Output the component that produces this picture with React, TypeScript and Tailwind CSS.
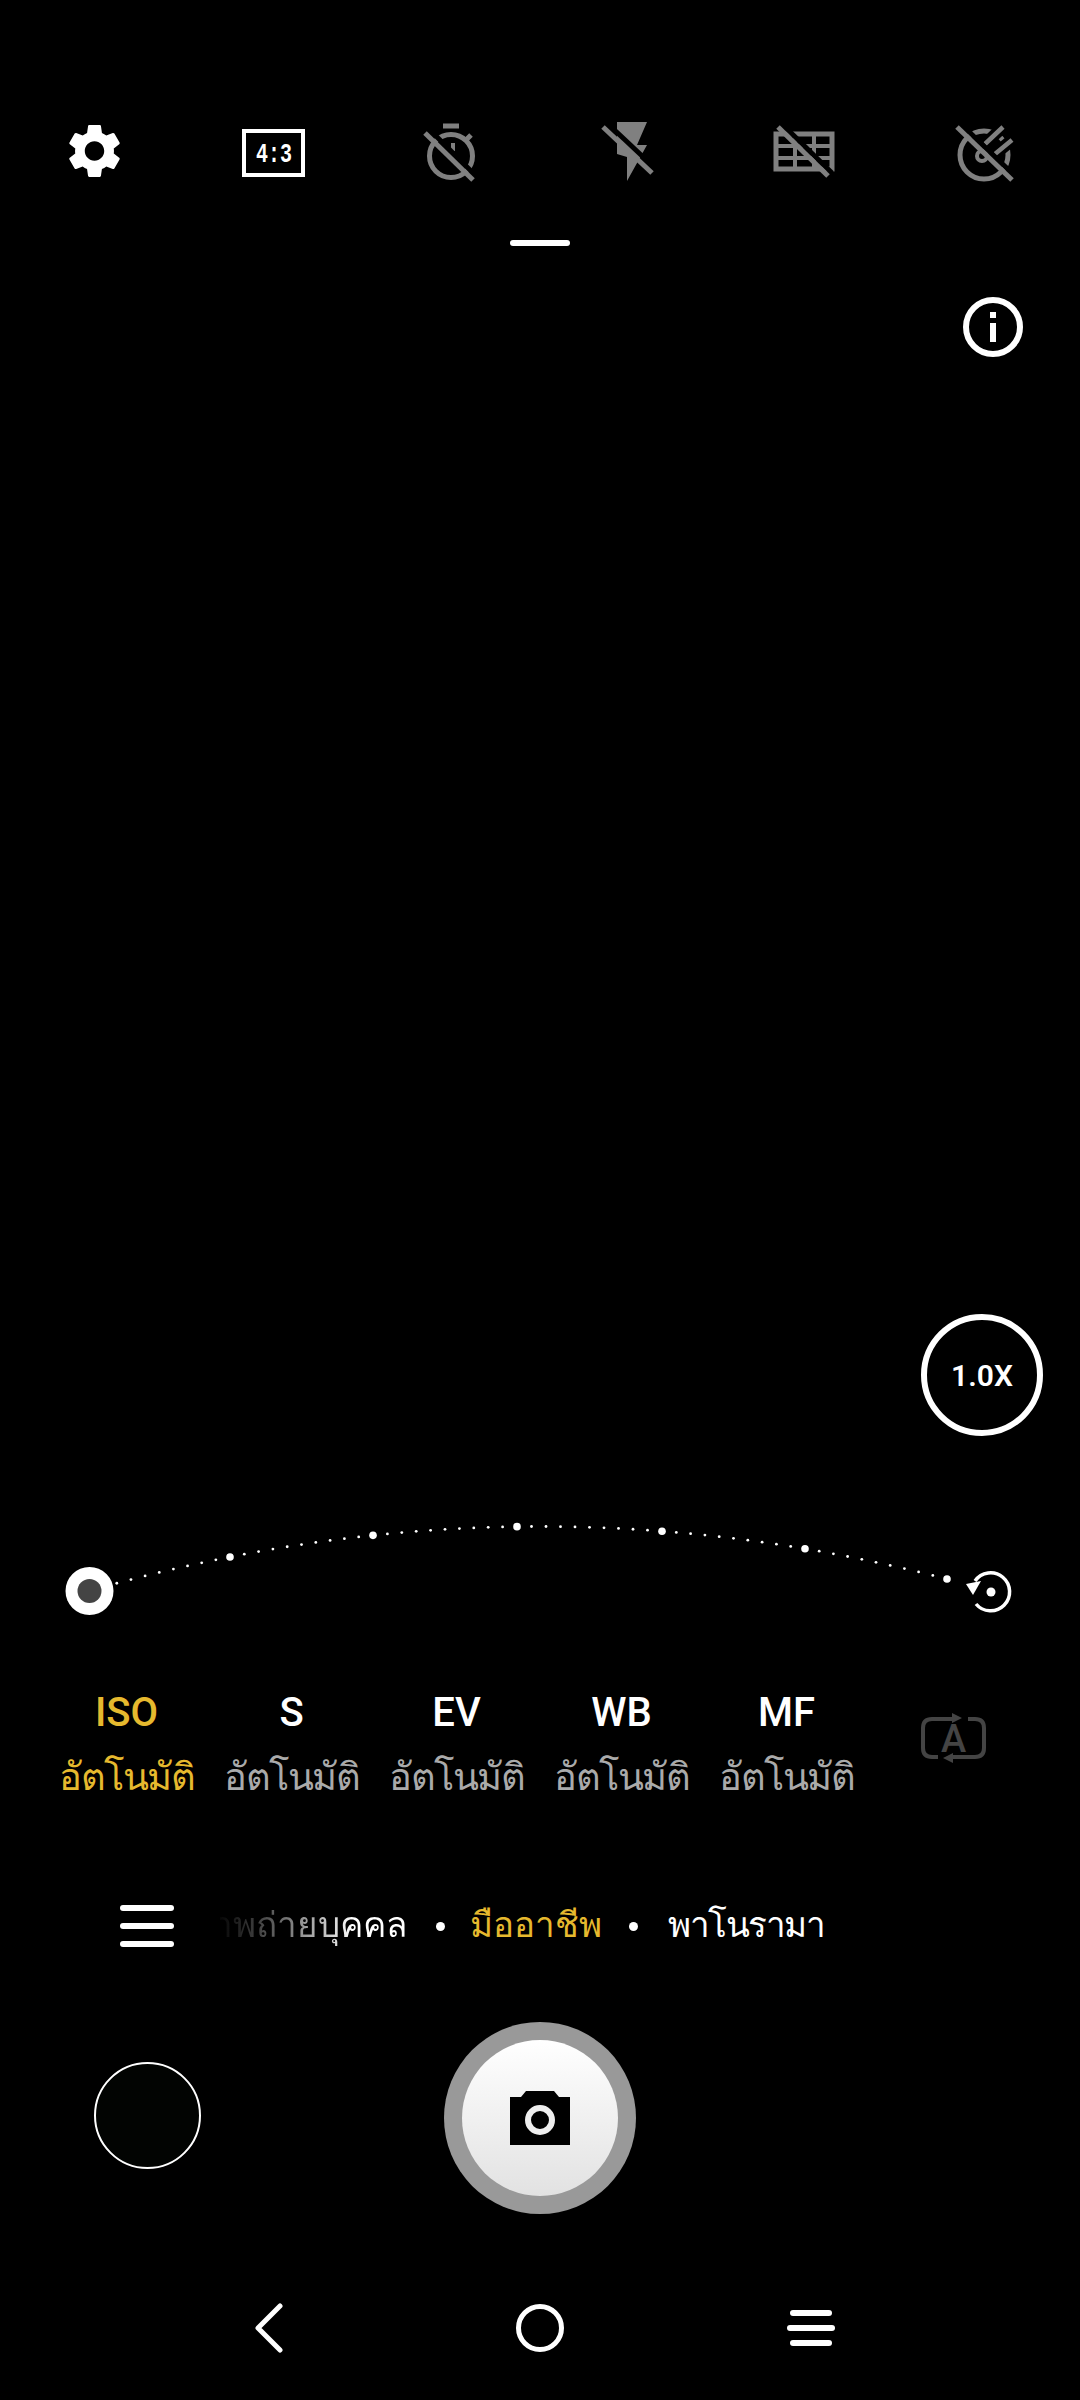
const GRAY = "#808080";

// big ticks on the dial, small dots are spaced evenly between them
const KNOTS = [230, 373, 517, 662, 805, 947];

const arcDots = Array.from({ length: 59 }, (_, n) => {
  const i = n - 8;
  let x = 230 + i * 14.15;
  if (i >= 0) {
    const k = Math.min(Math.floor(i / 10), KNOTS.length - 2);
    x = KNOTS[k] + ((KNOTS[k + 1] - KNOTS[k]) * (i - k * 10)) / 10;
  }
  const y = 1526.5 + 0.000317 * (x - 540) * (x - 540);
  return { x, y, big: i >= 0 && i % 10 === 0 };
});

const PARAMS = [
  { name: "ISO", active: true },
  { name: "S", active: false },
  { name: "EV", active: false },
  { name: "WB", active: false },
  { name: "MF", active: false },
];

function GearIcon() {
  return (
    <svg width="53" height="54" viewBox="2.7 2 18.6 20" fill="#fff">
      <path d="M19.14 12.94c.04-.3.06-.61.06-.94 0-.32-.02-.64-.07-.94l2.03-1.58c.18-.14.23-.41.12-.61l-1.92-3.32c-.12-.22-.37-.29-.59-.22l-2.39.96c-.5-.38-1.03-.7-1.62-.94l-.36-2.54c-.04-.24-.24-.41-.48-.41h-3.84c-.24 0-.43.17-.47.41l-.36 2.54c-.59.24-1.13.57-1.62.94l-2.39-.96c-.22-.08-.47 0-.59.22L2.74 8.87c-.12.21-.08.47.12.61l2.03 1.58c-.05.3-.09.63-.09.94s.02.64.07.94l-2.03 1.58c-.18.14-.23.41-.12.61l1.92 3.32c.12.22.37.29.59.22l2.39-.96c.5.38 1.03.7 1.62.94l.36 2.54c.05.24.24.41.48.41h3.84c.24 0 .44-.17.47-.41l.36-2.54c.59-.24 1.13-.56 1.62-.94l2.39.96c.22.08.47 0 .59-.22l1.92-3.32c.12-.22.07-.47-.12-.61l-2.01-1.58zM12 15.6c-1.98 0-3.6-1.62-3.6-3.6s1.62-3.6 3.6-3.6 3.6 1.62 3.6 3.6-1.62 3.6-3.6 3.6z" />
    </svg>
  );
}

function RatioIcon() {
  return (
    <svg width="72" height="72" viewBox="236 115 72 72">
      <rect x="244" y="131" width="59" height="44" fill="none" stroke="#fff" strokeWidth="4" />
      <text x="256" y="162" textLength="36" lengthAdjust="spacingAndGlyphs" fill="#fff" fontFamily="Liberation Mono, monospace" fontWeight="700" fontSize="28">
        4:3
      </text>
    </svg>
  );
}

function TimerOffIcon() {
  return (
    <svg width="72" height="72" viewBox="414 115 72 72" fill="none" stroke={GRAY} strokeWidth="5">
      <circle cx="451" cy="156" r="21.5" />
      <path d="M443 126h16M466 140l5-5" />
      <path d="M453 143v8" strokeWidth="4" />
      <path d="M428 128l48 48" stroke="#000" strokeWidth="5" />
      <path d="M425 133l48 47" />
    </svg>
  );
}

function FlashOffIcon() {
  return (
    <svg width="72" height="72" viewBox="592 115 72 72">
      <path d="M617 122h30l-10 23h10l-20 36v-24l-10-3z" fill={GRAY} />
      <path d="M607 123l49 46" stroke="#000" strokeWidth="5" />
      <path d="M603 127l49 46" stroke={GRAY} strokeWidth="5" />
    </svg>
  );
}

function GridOffIcon() {
  return (
    <svg width="72" height="72" viewBox="770 115 72 72" fill="none" stroke={GRAY} strokeWidth="4">
      <rect x="776" y="134" width="56" height="35" strokeWidth="5" />
      <path d="M776 146h56M776 158h56M795 134v35M814 134v35" strokeWidth="4" />
      <path d="M782 124l50 49" stroke="#000" strokeWidth="5" />
      <path d="M778 127l50 49" strokeWidth="5" />
    </svg>
  );
}

function MeterOffIcon() {
  return (
    <svg width="72" height="72" viewBox="948 115 72 72" fill="none" stroke={GRAY} strokeWidth="5">
      <circle cx="984" cy="155" r="24" />
      <circle cx="982" cy="156" r="5" strokeWidth="4" />
      <path d="M985 144l18-17M995 154l17-14" stroke="#000" strokeWidth="12" />
      <path d="M985 144l18-17M995 154l17-14" strokeWidth="4.5" />
      <path d="M961 124l55 53" stroke="#000" strokeWidth="5" />
      <path d="M957 127l55 53" />
    </svg>
  );
}

function InfoIcon() {
  return (
    <svg width="60" height="60" viewBox="963 297 60 60">
      <circle cx="993" cy="327" r="27" fill="none" stroke="#fff" strokeWidth="6" />
      <rect x="990" y="312" width="6" height="6" fill="#fff" />
      <rect x="990" y="323" width="6" height="19" fill="#fff" />
    </svg>
  );
}

function DialArc() {
  return (
    <svg className="block" width="1080" height="120" viewBox="0 1500 1080 120">
      {arcDots.map((d, i) => (
        <circle key={i} cx={d.x} cy={d.y} r={d.big ? 3.8 : 1.4} fill="#fff" />
      ))}
      <circle cx="89.5" cy="1591" r="24" fill="#fff" />
      <circle cx="89.5" cy="1591" r="12" fill="#444" />
      {/* reset */}
      <path d="M975 1581A19 19 0 1 1 976 1604" fill="none" stroke="#fff" strokeWidth="3.5" />
      <path d="M966 1584l15-3-8 14z" fill="#fff" />
      <circle cx="991" cy="1592" r="4.5" fill="#fff" />
    </svg>
  );
}

function AutoSwitchIcon() {
  return (
    <svg width="72" height="56" viewBox="918 1710 72 56" fill="none" stroke="#444" strokeWidth="4">
      <path d="M955 1719h-23q-9 0-9 9v20q0 9 9 9h6" />
      <path d="M968 1719h7q9 0 9 9v20q0 9-9 9h-25" />
      <path d="M952 1713l10 5-10 5zM953 1753l-10 5 10 5z" fill="#444" stroke="none" />
      <text x="953.5" y="1752" textAnchor="middle" fill="#444" stroke="none" fontFamily="Roboto, sans-serif" fontWeight="500" fontSize="38">
        A
      </text>
    </svg>
  );
}

function CameraGlyph() {
  return (
    <svg width="60" height="54" viewBox="510 2088 60 54">
      <path d="M510 2094h11l5-6h28l5 6h11v48h-60z" fill="#000" />
      <circle cx="540" cy="2117" r="12" fill="none" stroke="#eee" strokeWidth="6" />
    </svg>
  );
}

function Dot() {
  return <span className="block w-[9px] h-[9px] rounded-full bg-white" />;
}

export default function App() {
  return (
    <div className="w-[1080px] h-[2400px] bg-black overflow-hidden text-white font-[Roboto,sans-serif] pt-[115px]">
      {/* quick settings */}
      <div className="grid grid-cols-6 w-[1068px] ml-[5px] h-[72px]">
        <div className="flex items-center justify-center"><GearIcon /></div>
        <div className="flex items-center justify-center"><RatioIcon /></div>
        <div className="flex items-center justify-center"><TimerOffIcon /></div>
        <div className="flex items-center justify-center"><FlashOffIcon /></div>
        <div className="flex items-center justify-center"><GridOffIcon /></div>
        <div className="flex items-center justify-center"><MeterOffIcon /></div>
      </div>

      <div className="mt-[53px] mx-auto w-[60px] h-[6px] rounded-full bg-white" />

      <div className="mt-[51px] flex justify-end pr-[57px]">
        <InfoIcon />
      </div>

      <div className="mt-[957px] flex justify-end pr-[37px]">
        <div className="w-[122px] h-[122px] rounded-full border-[6px] border-white flex items-center justify-center text-[30px] font-semibold">
          1.0X
        </div>
      </div>

      <div className="mt-[64px]">
        <DialArc />
      </div>

      {/* manual params */}
      <div className="mt-[67px] h-[120px] flex items-start pl-[44px]">
        {PARAMS.map(p => (
          <div key={p.name} className="w-[165px] pt-[2px] flex flex-col items-center whitespace-nowrap">
            <span className={`text-[40px] leading-[48px] font-medium ${p.active ? "text-[#e6b92e]" : "text-white"}`}>{p.name}</span>
            <span className={`mt-[10px] text-[38px] leading-[60px] tracking-[-1.5px] ${p.active ? "text-[#e6b92e]" : "text-[#aaaaaa]"}`}>อัตโนมัติ</span>
          </div>
        ))}
        <div className="ml-[49px] mt-[23px]"><AutoSwitchIcon /></div>
      </div>

      {/* modes */}
      <div className="mt-[83px] h-[72px] flex items-center pl-[120px] text-[35px] whitespace-nowrap">
        <div className="w-[54px] flex flex-col gap-3">
          <span className="h-[6px] rounded-full bg-white" />
          <span className="h-[6px] rounded-full bg-white" />
          <span className="h-[6px] rounded-full bg-white" />
        </div>
        <div className="ml-[46px] w-[187px] flex justify-end overflow-hidden">
          <span className="shrink-0 bg-gradient-to-r from-black from-[5%] to-white to-[75%] bg-clip-text text-transparent">ภาพถ่ายบุคคล</span>
        </div>
        <div className="w-[66px] flex justify-center"><Dot /></div>
        <div className="w-[126px] flex justify-center text-[#e6b92e]">มืออาชีพ</div>
        <div className="w-[69px] flex justify-center"><Dot /></div>
        <div className="tracking-[-1.5px]">พาโนรามา</div>
      </div>

      {/* shutter */}
      <div className="mt-[60px] h-[192px] flex items-center">
        <div className="ml-[94px] mb-[6px] w-[107px] h-[107px] rounded-full border-2 border-white bg-[#020402]" />
        <div className="ml-[243px] w-[192px] h-[192px] rounded-full bg-[#999999] flex items-center justify-center">
          <div className="w-[156px] h-[156px] rounded-full bg-gradient-to-b from-white to-[#e2e2e2] flex items-center justify-center">
            <CameraGlyph />
          </div>
        </div>
      </div>

      {/* nav bar */}
      <div className="mt-[89px] grid grid-cols-3 w-[813px] mx-auto h-[48px]">
        <div className="flex items-center justify-center">
          <svg width="28" height="50" viewBox="0 0 28 50" fill="none" stroke="#fff" strokeWidth="5" strokeLinecap="round" strokeLinejoin="round">
            <path d="M25 3L3 25l22 22" />
          </svg>
        </div>
        <div className="flex items-center justify-center">
          <div className="w-[48px] h-[48px] rounded-full border-[5px] border-white" />
        </div>
        <div className="flex flex-col items-center justify-center gap-[9px]">
          <span className="w-[42px] h-[6px] rounded-full bg-white" />
          <span className="w-[48px] h-[6px] rounded-full bg-white" />
          <span className="w-[42px] h-[6px] rounded-full bg-white" />
        </div>
      </div>
    </div>
  );
}
